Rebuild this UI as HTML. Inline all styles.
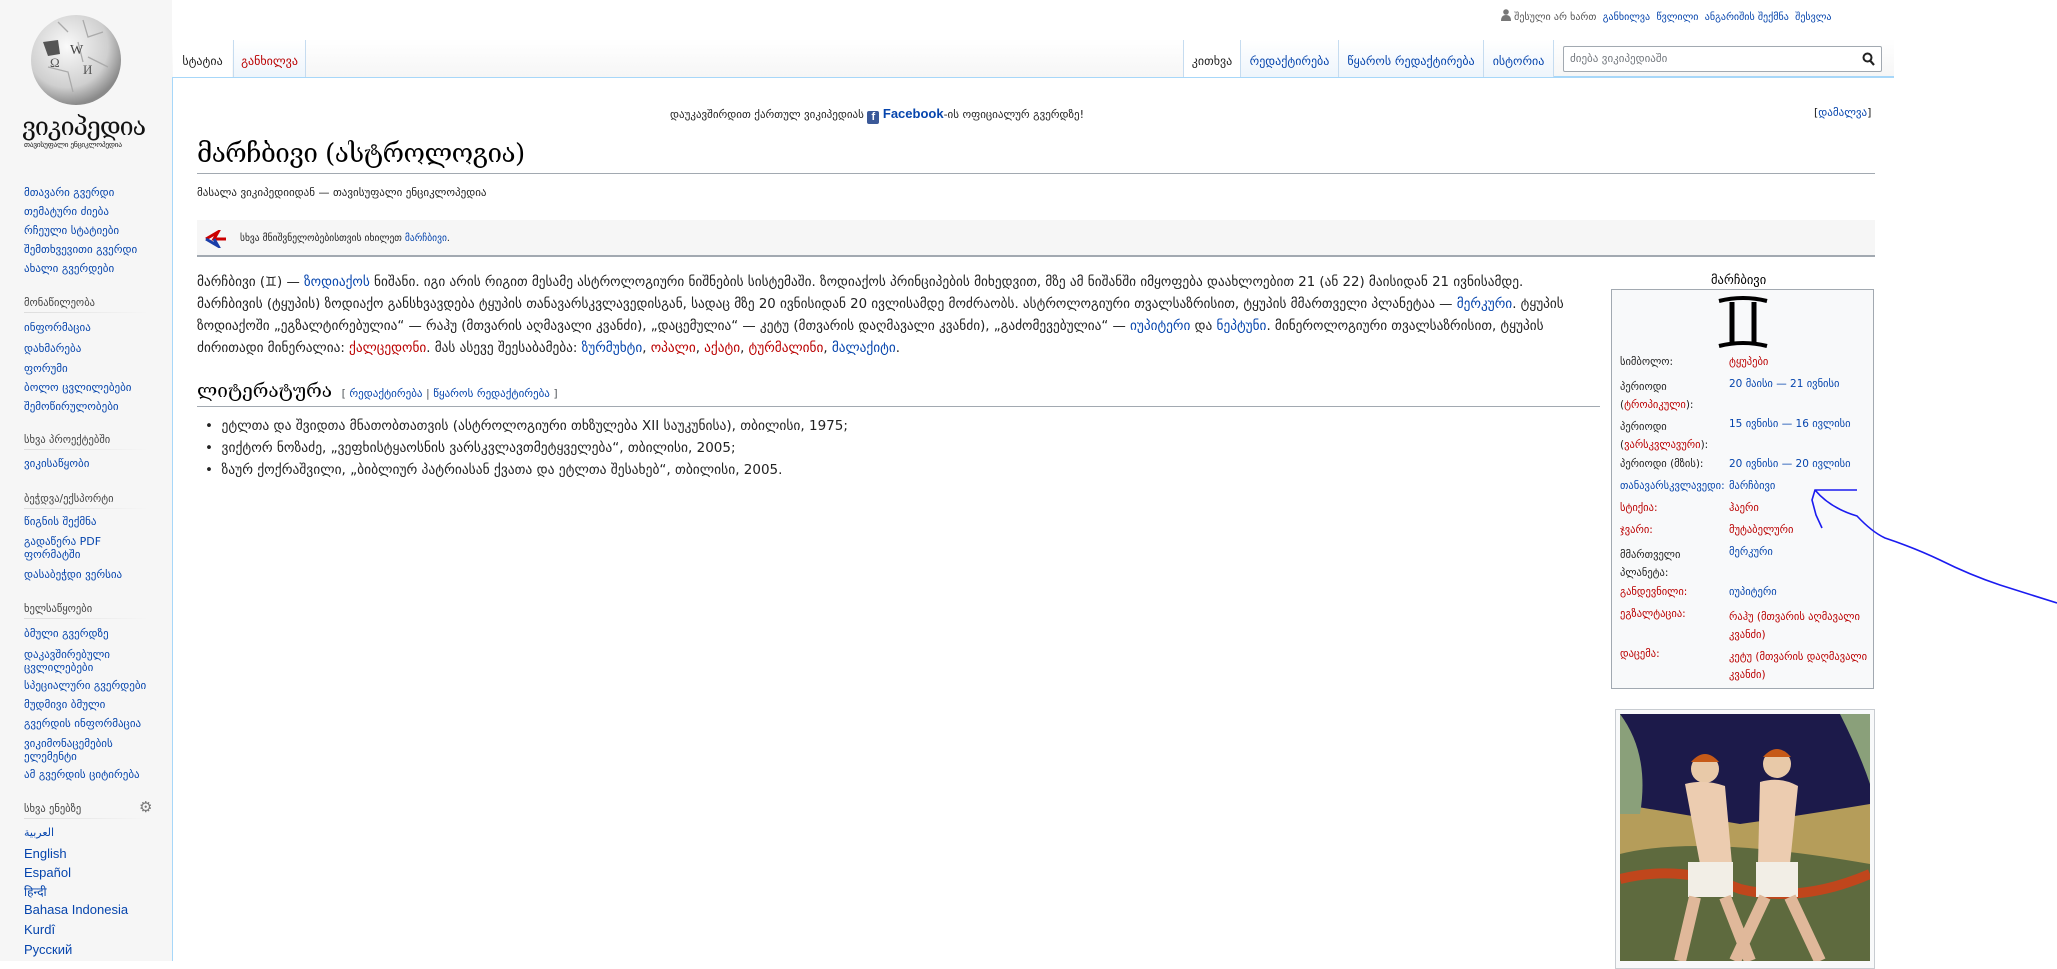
<!DOCTYPE html>
<html><head><meta charset="utf-8">
<style>
*{margin:0;padding:0;box-sizing:border-box}
body{width:2057px;height:961px;overflow:hidden;background:#fff;font-family:"DejaVu Sans","Liberation Sans",sans-serif;color:#222;position:relative}
a{color:#0645ad;text-decoration:none}
.r{color:#ba0000}
.abs{position:absolute;white-space:nowrap}
#side{position:absolute;left:0;top:0;width:172px;height:961px;background:#f6f6f6}
#topgrad{position:absolute;left:172px;top:0;width:1722px;height:77px;background:linear-gradient(#fff 50%,#f6f6f6)}
#content{position:absolute;left:172px;top:77px;width:1722px;height:884px;background:#fff;border-left:1px solid #a7d7f9;border-top:1px solid #a7d7f9}
.tab{position:absolute;top:40px;height:37px;font-size:12px;padding-top:14px;text-align:center;background:linear-gradient(#fff,#eef5fc);border-right:1px solid #c6dcf0}
.side a,.side div{position:absolute;left:24px;font-size:11px;white-space:nowrap}
.sh{color:#444;font-size:10.5px!important}
.hr{position:absolute;left:24px;width:125px;height:1px;background:linear-gradient(90deg,#ddd,#f6f6f6)}
.p{position:absolute;left:197px;font-size:13.3px;white-space:nowrap;line-height:22px}
.ib{position:absolute;font-size:10.5px;white-space:nowrap}
</style></head><body>
<div id="side"></div>
<div id="topgrad"></div>
<div id="content"></div>

<!-- logo -->
<svg class="abs" style="left:28px;top:12px" width="96" height="96" viewBox="0 0 96 96">
<defs><radialGradient id="g" cx="40%" cy="35%" r="65%"><stop offset="0" stop-color="#fafafa"/><stop offset=".7" stop-color="#cfcfcf"/><stop offset="1" stop-color="#8a8a8a"/></radialGradient></defs>
<circle cx="48" cy="48" r="45" fill="url(#g)"/>
<path d="M15 30 L30 28 L32 42 L20 44 Z" fill="#555"/>
<path d="M30 10 L40 20 M55 8 L60 25 L75 20 M20 55 L40 60 L45 80 M60 45 L80 55 M50 30 L55 50" stroke="#aaa" stroke-width="1.3" fill="none"/>
<text x="42" y="42" font-size="14" fill="#444" font-family="Liberation Serif">W</text>
<text x="22" y="55" font-size="13" fill="#555" font-family="Liberation Serif">Ω</text>
<text x="55" y="62" font-size="13" fill="#555" font-family="Liberation Serif">И</text>
</svg>
<div class="abs" style="left:22px;top:112px;font-size:25px;font-family:'DejaVu Serif',serif;color:#111;letter-spacing:-1px">ვიკიპედია</div>
<div class="abs" style="left:24px;top:140px;font-size:7.5px;color:#222;letter-spacing:-.3px">თავისუფალი ენციკლოპედია</div>

<div class="side">
<a style="top:186px">მთავარი გვერდი</a>
<a style="top:205px">თემატური ძიება</a>
<a style="top:224px">რჩეული სტატიები</a>
<a style="top:243px">შემთხვევითი გვერდი</a>
<a style="top:262px">ახალი გვერდები</a>
<div class="sh" style="top:297px">მონაწილეობა</div><div class="hr" style="top:312px"></div>
<a style="top:321px">ინფორმაცია</a>
<a style="top:342px">დახმარება</a>
<a style="top:362px">ფორუმი</a>
<a style="top:381px">ბოლო ცვლილებები</a>
<a style="top:400px">შემოწირულობები</a>
<div class="sh" style="top:434px">სხვა პროექტებში</div><div class="hr" style="top:449px"></div>
<a style="top:457px">ვიკისაწყობი</a>
<div class="sh" style="top:493px">ბეჭდვა/ექსპორტი</div><div class="hr" style="top:508px"></div>
<a style="top:515px">წიგნის შექმნა</a>
<a style="top:535px;line-height:13px">გადაწერა PDF<br>ფორმატში</a>
<a style="top:568px">დასაბეჭდი ვერსია</a>
<div class="sh" style="top:603px">ხელსაწყოები</div><div class="hr" style="top:618px"></div>
<a style="top:627px">ბმული გვერდზე</a>
<a style="top:648px;line-height:13px">დაკავშირებული<br>ცვლილებები</a>
<a style="top:679px">სპეციალური გვერდები</a>
<a style="top:698px">მუდმივი ბმული</a>
<a style="top:717px">გვერდის ინფორმაცია</a>
<a style="top:737px;line-height:13px">ვიკიმონაცემების<br>ელემენტი</a>
<a style="top:768px">ამ გვერდის ციტირება</a>
<div class="sh" style="top:803px">სხვა ენებზე</div><div class="hr" style="top:818px"></div>
<div style="left:139px!important;top:798px;font-size:15px!important;color:#777">⚙</div>
<a style="top:826px;font-family:'DejaVu Sans'">العربية</a>
<a style="top:846px;font-family:'Liberation Sans';font-size:13px">English</a>
<a style="top:865px;font-family:'Liberation Sans';font-size:13px">Español</a>
<a style="top:883px;font-size:12px">हिन्दी</a>
<a style="top:902px;font-family:'Liberation Sans';font-size:13px">Bahasa Indonesia</a>
<a style="top:922px;font-family:'Liberation Sans';font-size:13px">Kurdî</a>
<a style="top:942px;font-family:'Liberation Sans';font-size:13px">Русский</a>
</div>

<!-- personal -->
<div class="abs" style="left:1501px;top:9px;font-size:10px;color:#555">
<svg width="10" height="12" viewBox="0 0 10 12" style="vertical-align:-1px"><circle cx="5" cy="3" r="2.8" fill="#777"/><path d="M0 12 Q0 6 5 6 Q10 6 10 12Z" fill="#777"/></svg>
შესული არ ხართ &nbsp;<a>განხილვა</a> &nbsp;<a>წვლილი</a> &nbsp;<a>ანგარიშის შექმნა</a> &nbsp;<a>შესვლა</a></div>

<!-- tabs -->
<div class="tab" style="left:173px;width:59px;background:#fff;border-right:none">სტატია</div>
<div class="tab" style="left:233px;width:73px;color:#ba0000;border-left:1px solid #c6dcf0">განხილვა</div>
<div class="abs" style="left:306px;top:77px;width:877px;height:1px;background:#a7d7f9"></div>
<div class="tab" style="left:1183px;width:58px;background:#fff;border-left:1px solid #c6dcf0">კითხვა</div>
<div class="tab" style="left:1241px;width:98px"><a>რედაქტირება</a></div>
<div class="tab" style="left:1339px;width:145px"><a>წყაროს რედაქტირება</a></div>
<div class="tab" style="left:1484px;width:70px"><a>ისტორია</a></div>
<div class="abs" style="left:1554px;top:76px;width:340px;height:1px;background:#a7d7f9"></div>
<div class="abs" style="left:1563px;top:46px;width:319px;height:26px;border:1px solid #a2a9b1;border-radius:2px;background:#fff;font-size:11px;color:#72777d;padding:5px 6px">ძიება ვიკიპედიაში
<svg style="position:absolute;right:6px;top:5px" width="13" height="14" viewBox="0 0 13 14"><circle cx="5.5" cy="5.5" r="4" stroke="#222" stroke-width="2" fill="none"/><path d="M8.5 9 L12 13" stroke="#222" stroke-width="2.2"/></svg></div>

<!-- sitenotice -->
<div class="abs" style="left:670px;top:106px;font-size:11px;color:#222">დაუკავშირდით ქართულ ვიკიპედიას <span style="display:inline-block;width:12px;height:13px;background:#3b5998;color:#fff;font:bold 11px 'Liberation Sans';text-align:center;vertical-align:-2px;border-radius:2px">f</span> <a style="font:bold 13px 'Liberation Sans'">Facebook</a>-ის ოფიციალურ გვერდზე!</div>
<div class="abs" style="left:1814px;top:106px;font-size:11px">[<a>დამალვა</a>]</div>

<!-- title -->
<div class="abs" style="left:197px;top:139px;font-size:26px;font-family:'DejaVu Serif',serif;color:#000;letter-spacing:-.5px">მარჩბივი (ასტროლოგია)</div>
<div class="abs" style="left:197px;top:173px;width:1678px;height:1px;background:#a2a9b1"></div>
<div class="abs" style="left:197px;top:186px;font-size:11px;color:#222">მასალა ვიკიპედიიდან — თავისუფალი ენციკლოპედია</div>

<div class="abs" style="left:197px;top:220px;width:1678px;height:37px;background:#f6f6f6;border-bottom:2px solid #a2a9b1"></div>
<svg class="abs" style="left:204px;top:230px" width="22" height="18" viewBox="0 0 22 18"><path d="M2 9 L14 2 L10 9 L22 9" stroke="#c00" stroke-width="3" fill="none"/><path d="M2 9 L14 16 L10 9" stroke="#1a3da8" stroke-width="3" fill="none"/></svg>
<div class="abs" style="left:240px;top:233px;font-size:9.5px;color:#222">სხვა მნიშვნელობებისთვის იხილეთ <a>მარჩბივი</a>.</div>

<!-- paragraph -->
<div class="p" style="top:272px">მარჩბივი (♊) — <a>ზოდიაქოს</a> ნიშანი. იგი არის რიგით მესამე ასტროლოგიური ნიშნების სისტემაში. ზოდიაქოს პრინციპების მიხედვით, მზე ამ ნიშანში იმყოფება დაახლოებით 21 (ან 22) მაისიდან 21 ივნისამდე.</div>
<div class="p" style="top:294px">მარჩბივის (ტყუპის) ზოდიაქო განსხვავდება ტყუპის თანავარსკვლავედისგან, სადაც მზე 20 ივნისიდან 20 ივლისამდე მოძრაობს. ასტროლოგიური თვალსაზრისით, ტყუპის მმართველი პლანეტაა — <a>მერკური</a>. ტყუპის</div>
<div class="p" style="top:316px">ზოდიაქოში „ეგზალტირებულია“ — რაჰუ (მთვარის აღმავალი კვანძი), „დაცემულია“ — კეტუ (მთვარის დაღმავალი კვანძი), „გაძომევებულია“ — <a>იუპიტერი</a> და <a>ნეპტუნი</a>. მინეროლოგიური თვალსაზრისით, ტყუპის</div>
<div class="p" style="top:338px">ძირითადი მინერალია: <a class="r">ქალცედონი</a>. მას ასევე შეესაბამება: <a>ზურმუხტი</a>, <a class="r">ოპალი</a>, <a class="r">აქატი</a>, <a class="r">ტურმალინი</a>, <a>მალაქიტი</a>.</div>

<div class="abs" style="left:197px;top:380px;font-size:19px;font-family:'DejaVu Serif',serif;color:#000">ლიტერატურა <span style="font-size:11px;font-family:'DejaVu Sans';color:#54595d">&nbsp;[ <a>რედაქტირება</a> | <a>წყაროს რედაქტირება</a> ]</span></div>
<div class="abs" style="left:197px;top:406px;width:1403px;height:1px;background:#a2a9b1"></div>
<div class="p" style="top:415px;left:205px;font-size:13.5px">• &nbsp;ეტლთა და შვიდთა მნათობთათვის (ასტროლოგიური თხზულება XII საუკუნისა), თბილისი, 1975;</div>
<div class="p" style="top:437px;left:205px;font-size:13.5px">• &nbsp;ვიქტორ ნოზაძე, „ვეფხისტყაოსნის ვარსკვლავთმეტყველება“, თბილისი, 2005;</div>
<div class="p" style="top:459px;left:205px;font-size:13.5px">• &nbsp;ზაურ ქოქრაშვილი, „ბიბლიურ პატრიასან ქვათა და ეტლთა შესახებ“, თბილისი, 2005.</div>

<!-- infobox -->
<div class="abs" style="left:1711px;top:272px;font-size:12.5px;color:#000">მარჩბივი</div>
<div class="abs" style="left:1611px;top:289px;width:263px;height:400px;background:#f8f9fa;border:1px solid #a2a9b1"></div>
<svg class="abs" style="left:1717px;top:296px" width="52" height="55" viewBox="0 0 52 55"><path d="M2 5 Q26 -1 50 5 M2 50 Q26 44 50 50" stroke="#000" stroke-width="4" fill="none"/><path d="M15 6 V48 M37 6 V48" stroke="#000" stroke-width="5"/></svg>
<div class="ib" style="left:1620px;top:356px">სიმბოლო:</div><a class="ib r" style="left:1729px;top:356px">ტყუპები</a>
<div class="ib" style="left:1620px;top:378px;line-height:18px">პერიოდი<br>(<a class="r">ტროპიკული</a>):</div><a class="ib" style="left:1729px;top:378px">20 მაისი — 21 ივნისი</a>
<div class="ib" style="left:1620px;top:418px;line-height:18px">პერიოდი<br>(<a class="r">ვარსკვლავური</a>):</div><a class="ib" style="left:1729px;top:418px">15 ივნისი — 16 ივლისი</a>
<div class="ib" style="left:1620px;top:458px">პერიოდი (მზის):</div><a class="ib" style="left:1729px;top:458px">20 ივნისი — 20 ივლისი</a>
<a class="ib" style="left:1620px;top:480px">თანავარსკვლავედი:</a><a class="ib" style="left:1729px;top:480px">მარჩბივი</a>
<a class="ib r" style="left:1620px;top:502px">სტიქია:</a><a class="ib r" style="left:1729px;top:502px">ჰაერი</a>
<a class="ib r" style="left:1620px;top:524px">ჯვარი:</a><a class="ib r" style="left:1729px;top:524px">მუტაბელური</a>
<div class="ib" style="left:1620px;top:546px;line-height:18px">მმართველი<br>პლანეტა:</div><a class="ib" style="left:1729px;top:546px">მერკური</a>
<a class="ib r" style="left:1620px;top:586px">განდევნილი:</a><a class="ib" style="left:1729px;top:586px">იუპიტერი</a>
<a class="ib r" style="left:1620px;top:608px">ეგზალტაცია:</a><a class="ib r" style="left:1729px;top:608px;line-height:18px">რაჰუ (მთვარის აღმავალი<br>კვანძი)</a>
<a class="ib r" style="left:1620px;top:648px">დაცემა:</a><a class="ib r" style="left:1729px;top:648px;line-height:18px">კეტუ (მთვარის დაღმავალი<br>კვანძი)</a>

<!-- image -->
<div class="abs" style="left:1615px;top:709px;width:260px;height:260px;border:1px solid #c8ccd1;background:#f8f9fa"></div>
<svg class="abs" style="left:1620px;top:714px" width="250" height="247" viewBox="0 0 250 247">
<rect width="250" height="247" fill="#1c1a4a"/>
<path d="M0 90 Q60 100 120 110 Q190 100 250 90 V247 H0Z" fill="#b59d5a"/>
<path d="M0 140 Q80 120 250 150 V247 H0Z" fill="#5e6a3e"/>
<path d="M0 165 Q60 150 120 175 Q180 190 250 160" stroke="#c0461c" stroke-width="10" fill="none"/>
<path d="M0 0 Q30 40 20 100 L0 100Z" fill="#8aa07a"/>
<path d="M220 0 Q240 40 250 70 V0Z" fill="#8aa07a"/>
<circle cx="85" cy="55" r="14" fill="#e8c9a8"/><path d="M71 48 Q85 32 99 48Z" fill="#c65a18"/>
<circle cx="157" cy="50" r="14" fill="#e8c9a8"/><path d="M143 43 Q157 27 171 43Z" fill="#c65a18"/>
<path d="M65 70 Q85 65 105 72 L112 150 L80 150 Z" fill="#ecccb0"/>
<path d="M140 68 Q160 62 178 72 L170 150 L138 150 Z" fill="#ecccb0"/>
<rect x="68" y="148" width="45" height="35" fill="#f2eee6"/><rect x="136" y="148" width="42" height="35" fill="#f2eee6"/>
<path d="M75 183 L60 247 M105 183 L130 247 M145 183 L115 247 M170 183 L200 247" stroke="#e0b89a" stroke-width="12"/>
</svg>

<!-- blue annotation -->
<svg class="abs" style="left:1800px;top:470px" width="257" height="150" viewBox="0 0 257 150">
<path d="M57 20 L15 20 L12 30 L16 45 L22 58 M15 20 Q30 38 57 46 Q72 62 85 68 Q115 78 140 90 Q170 105 200 115 Q225 123 257 133" stroke="#1b1bf0" stroke-width="1.6" fill="none"/>
</svg>
</body></html>
